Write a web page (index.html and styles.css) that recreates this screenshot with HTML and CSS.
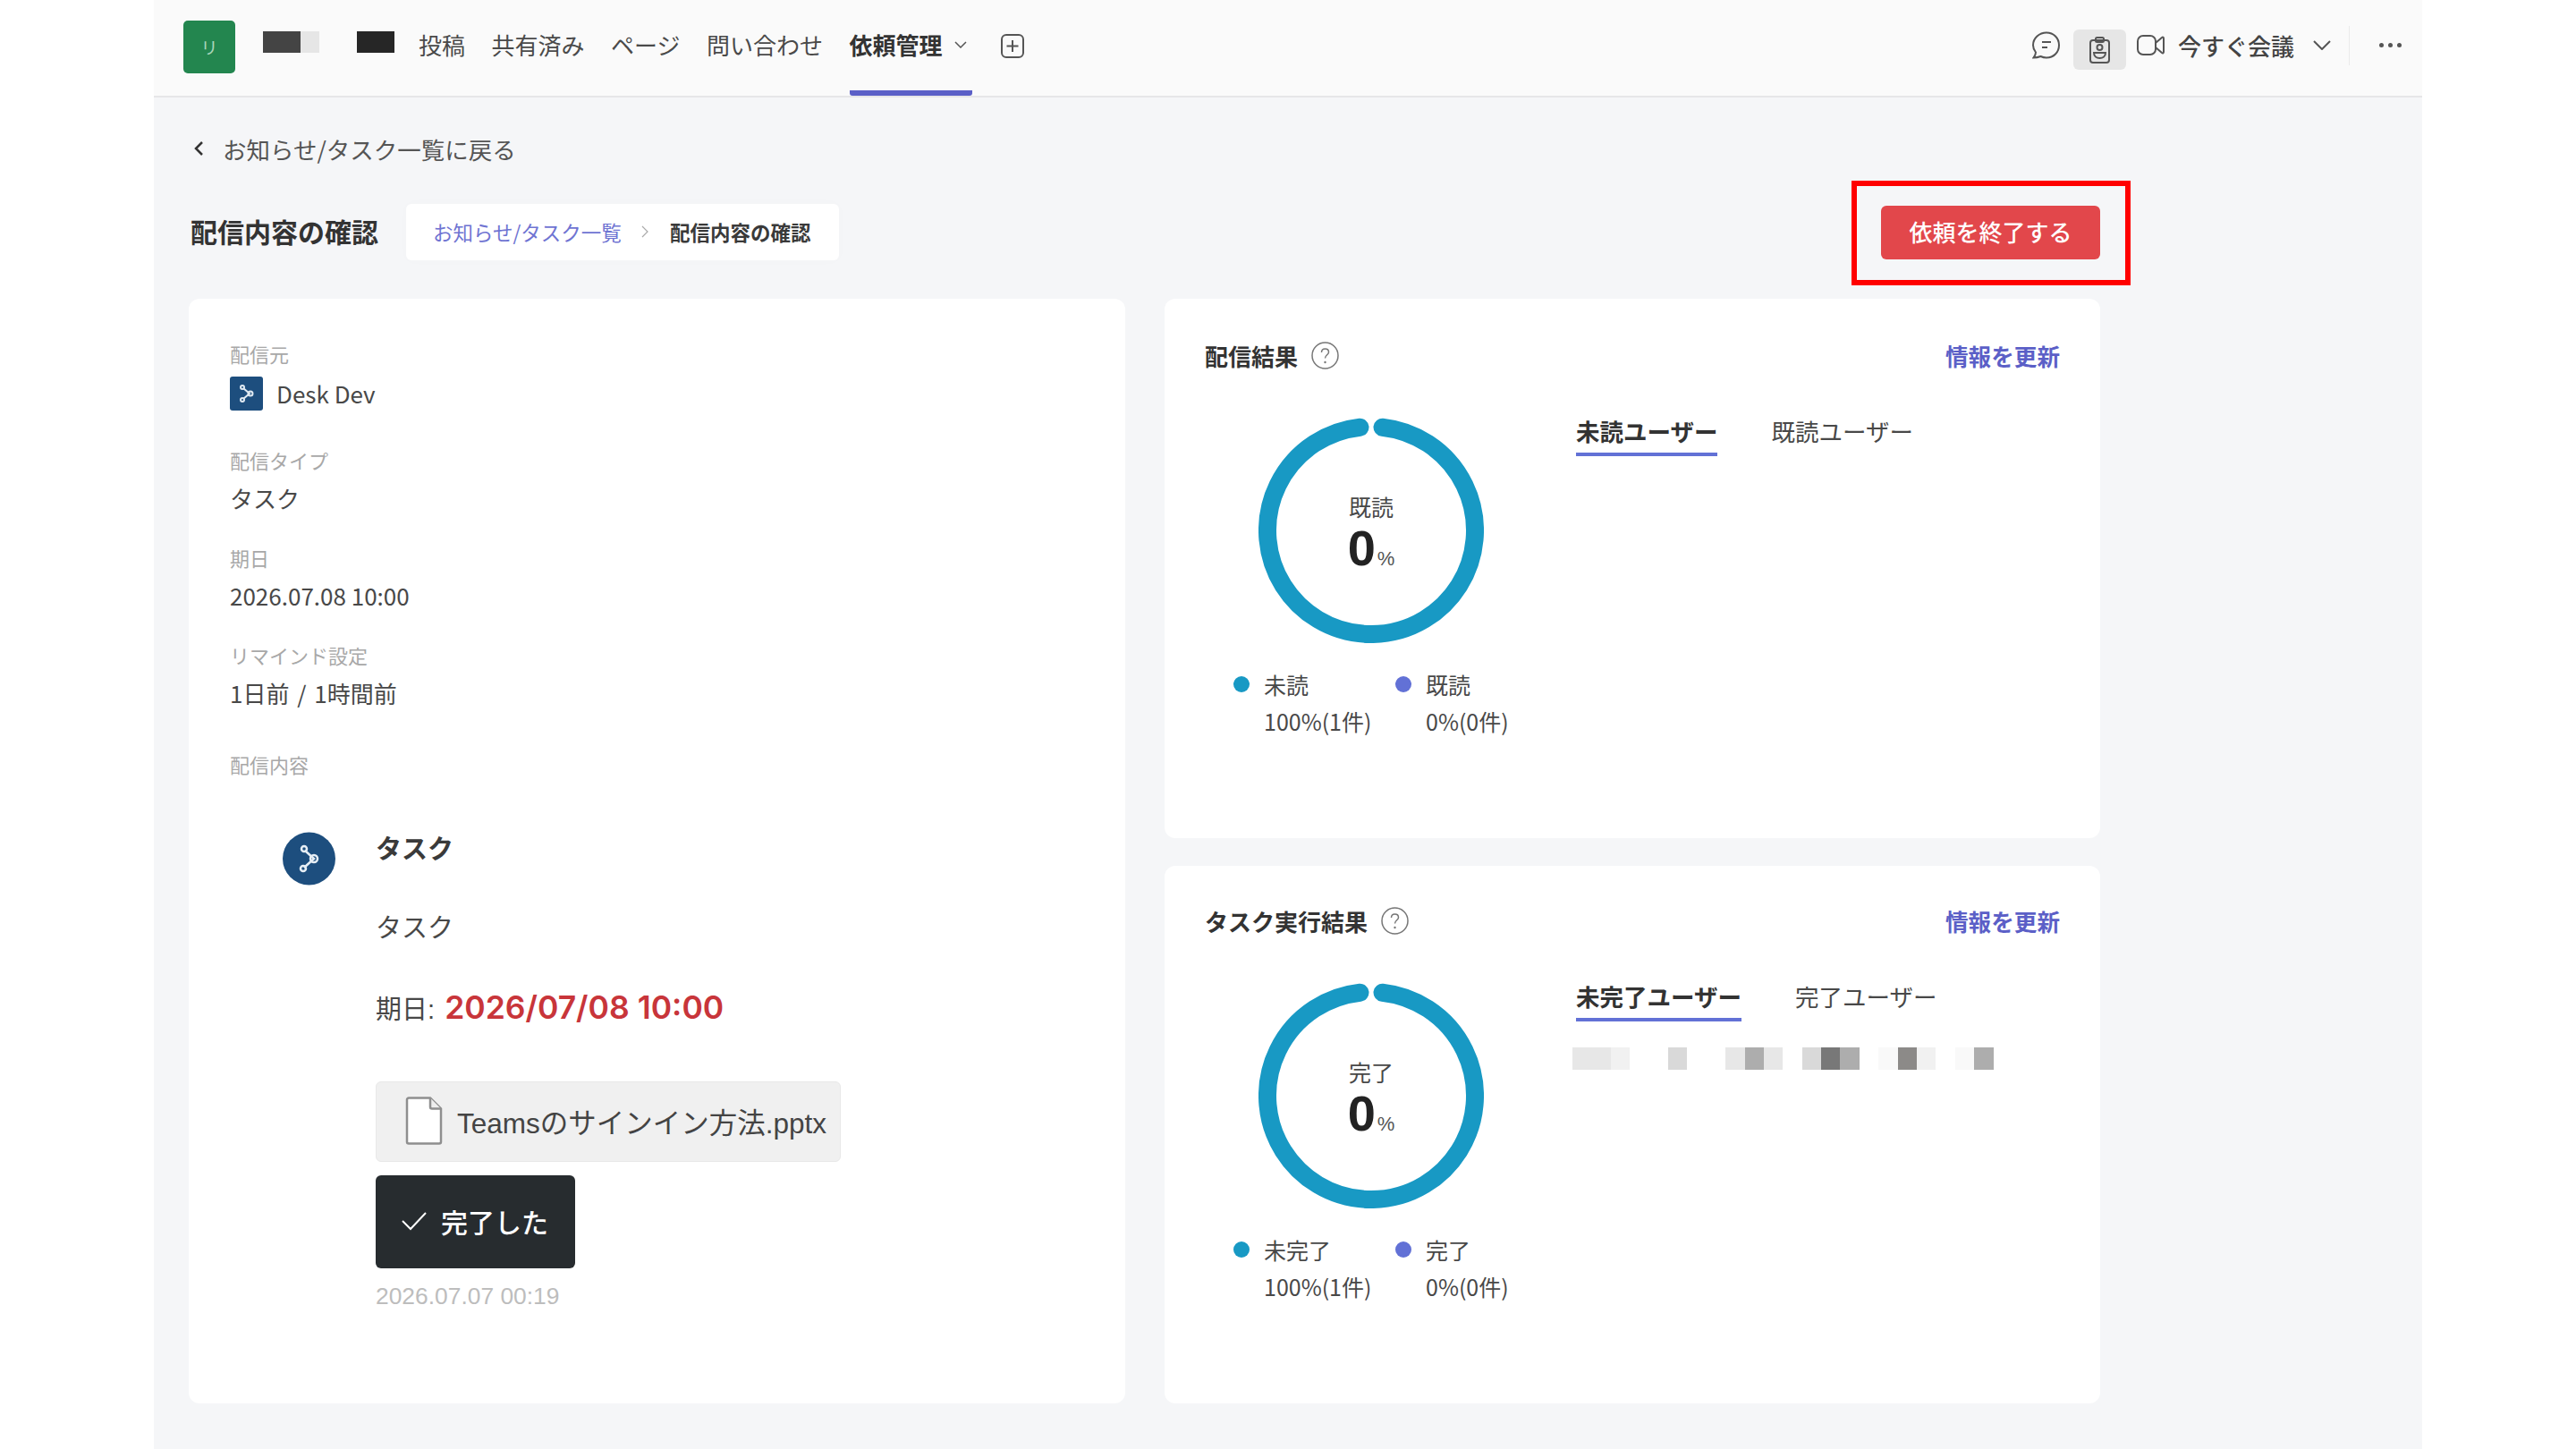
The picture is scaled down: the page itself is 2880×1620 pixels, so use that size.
FILE: index.html
```html
<!DOCTYPE html>
<html lang="ja">
<head>
    <meta charset="UTF-8">
    <meta name="viewport" content="width=device-width, initial-scale=1.0">
    <title>配信内容の確認</title>
    <link rel="stylesheet" href="styles.css">
</head>
<body>
    <div class="app">
        <!-- Barra superior -->
        <header class="topbar">
            <div class="app-tile">リ</div>
            <div class="redact redact-a"><span></span><span></span></div>
            <div class="redact redact-b"></div>
            <nav class="nav">
                <a class="nav-item">投稿</a>
                <a class="nav-item">共有済み</a>
                <a class="nav-item">ページ</a>
                <a class="nav-item">問い合わせ</a>
                <a class="nav-item nav-active">依頼管理
                    <svg class="nav-chevron" viewBox="0 0 14 8"><path d="M1 1l6 6 6-6"/></svg>
                </a>
                <svg class="nav-plus" viewBox="0 0 26 27"><rect x="1" y="1" width="24" height="25" rx="5"/><path d="M13 7v13M6.500 13.500h13"/></svg>
            </nav>
            <div class="top-actions">
                <svg class="icon-chat" viewBox="0 0 31 31"><path d="M16 1.500c8 0 14 6 14 14s-6 14-14 14c-2.500 0-4.500-.5-6.500-1.500-2.500 1-5 1.500-8 1.500 1.500-2 2.500-3.500 2.500-6-2-2.500-3-5-3-8 0-8 7-14 15-14z"/><path d="M11 12h10M11 18h6"/></svg>
                <div class="icon-selected">
                    <svg class="icon-badge" viewBox="0 0 23 30"><rect x="1" y="4" width="21" height="25" rx="3"/><rect x="7" y="1" width="9" height="5" rx="1.500"/><circle cx="11.500" cy="12" r="3"/><path d="M5 18h13c0 4-3 6-6.500 6S5 22 5 18z"/></svg>
                </div>
                <svg class="icon-video" viewBox="0 0 31 23"><rect x="1" y="1" width="20" height="21" rx="6"/><path d="M21 9l7-6c1-.8 2-.3 2 1v15c0 1.300-1 1.800-2 1l-7-6"/></svg>
                <span class="meet-label">今すぐ会議</span>
                <svg class="meet-chevron" viewBox="0 0 20 11"><path d="M1 1l9 9 9-9"/></svg>
                <div class="top-divider"></div>
                <div class="dots"><i></i><i></i><i></i></div>
            </div>
        </header>

        <main class="content">
            <a class="back-link">
                <svg class="back-chevron" viewBox="0 0 12 18"><path d="M10 2L3 9l7 7"/></svg>
                お知らせ/タスク一覧に戻る
            </a>

            <div class="title-row">
                <h1 class="page-title">配信内容の確認</h1>
                <div class="crumbs">
                    <a class="crumb-link">お知らせ/タスク一覧</a>
                    <svg class="crumb-sep" viewBox="0 0 8 14"><path d="M1 1l6 6-6 6"/></svg>
                    <span class="crumb-current">配信内容の確認</span>
                </div>
                <div class="finish-wrap">
                    <button class="finish-btn">依頼を終了する</button>
                    <div class="highlight"></div>
                </div>
            </div>

            <div class="columns">
                <!-- Coluna de detalhes -->
                <section class="card detail-card">
                    <div class="field field-source">
                        <div class="field-label">配信元</div>
                        <div class="field-value source-row">
                            <svg class="source-icon" viewBox="0 0 37 38"><rect width="37" height="38" rx="3" fill="#1d4e7e"/><g fill="none" stroke="#dfe9f2" stroke-width="2"><path d="M15 13l7 6-7 6"/><circle cx="14" cy="12" r="2"/><circle cx="23" cy="19" r="2.500"/><circle cx="14" cy="26" r="2"/></g></svg>
                            <span>Desk Dev</span>
                        </div>
                    </div>
                    <div class="field">
                        <div class="field-label">配信タイプ</div>
                        <div class="field-value">タスク</div>
                    </div>
                    <div class="field">
                        <div class="field-label">期日</div>
                        <div class="field-value">2026.07.08 10:00</div>
                    </div>
                    <div class="field field-remind">
                        <div class="field-label">リマインド設定</div>
                        <div class="field-value value-spaced">1日前 / 1時間前</div>
                    </div>
                    <div class="field-label">配信内容</div>

                    <div class="message">
                        <svg class="message-avatar" viewBox="0 0 59 60"><circle cx="29.500" cy="30" r="29.500" fill="#1d4e7e"/><g fill="none" stroke="#e6eef5" stroke-width="2.500"><path d="M25 21l10 9-11 10"/><circle cx="24" cy="19" r="3"/><circle cx="35" cy="30" r="4"/><circle cx="23" cy="41" r="3"/></g></svg>
                        <div class="message-body">
                            <div class="message-title">タスク</div>
                            <div class="message-text">タスク</div>
                            <div class="message-due">期日: <strong>2026/07/08 10:00</strong></div>
                            <div class="file-box">
                                <svg class="file-icon" viewBox="0 0 42 54"><path d="M2 3.500A2 2 0 0 1 4 1.500h24l12 12V50.500a2 2 0 0 1-2 2H4a2 2 0 0 1-2-2z" fill="#fff" stroke="#8f8f8f" stroke-width="2.500"/><path d="M28 1.500v10a2 2 0 0 0 2 2h10" fill="#eee" stroke="#8f8f8f" stroke-width="2.500"/></svg>
                                <span>Teamsのサインイン方法.pptx</span>
                            </div>
                            <button class="done-btn">
                                <svg class="done-check" viewBox="0 0 28 22"><path d="M1 11l9 9L27 2"/></svg>
                                完了した
                            </button>
                            <div class="message-time">2026.07.07 00:19</div>
                        </div>
                    </div>
                </section>

                <!-- Coluna de resultados -->
                <div class="results">
                    <section class="card result-card result-delivery">
                        <div class="result-head">
                            <h2 class="result-title">配信結果</h2>
                            <svg class="help-icon" viewBox="0 0 31 31"><circle cx="15.500" cy="15.500" r="14.500"/><path d="M11.500 12c0-2.500 1.800-4 4-4s4 1.500 4 3.700c0 3-4 3.300-4 6.800"/><circle class="help-dot" cx="15.500" cy="23" r="1.200"/></svg>
                            <a class="refresh-link">情報を更新</a>
                        </div>
                        <div class="result-body">
                            <div class="chart-col">
                                <div class="donut">
                                    <svg class="donut-ring" viewBox="0 0 252 252"><path d="M138.500 10.700A116 116 0 1 1 113.500 10.700"/></svg>
                                    <div class="donut-center">
                                        <div class="donut-label">既読</div>
                                        <div class="donut-num">0<small>%</small></div>
                                    </div>
                                </div>
                                <div class="legend">
                                    <div class="legend-item">
                                        <i class="legend-dot dot-blue"></i><span>未読</span>
                                        <span class="legend-count">100%(1件)</span>
                                    </div>
                                    <div class="legend-item">
                                        <i class="legend-dot dot-purple"></i><span>既読</span>
                                        <span class="legend-count">0%(0件)</span>
                                    </div>
                                </div>
                            </div>
                            <div class="tabs-col">
                                <div class="tabs">
                                    <a class="tab tab-active">未読ユーザー</a>
                                    <a class="tab">既読ユーザー</a>
                                </div>
                            </div>
                        </div>
                    </section>

                    <section class="card result-card result-task">
                        <div class="result-head">
                            <h2 class="result-title">タスク実行結果</h2>
                            <svg class="help-icon" viewBox="0 0 31 31"><circle cx="15.500" cy="15.500" r="14.500"/><path d="M11.500 12c0-2.500 1.800-4 4-4s4 1.500 4 3.700c0 3-4 3.300-4 6.800"/><circle class="help-dot" cx="15.500" cy="23" r="1.200"/></svg>
                            <a class="refresh-link">情報を更新</a>
                        </div>
                        <div class="result-body">
                            <div class="chart-col">
                                <div class="donut">
                                    <svg class="donut-ring" viewBox="0 0 252 252"><path d="M138.500 10.700A116 116 0 1 1 113.500 10.700"/></svg>
                                    <div class="donut-center">
                                        <div class="donut-label">完了</div>
                                        <div class="donut-num">0<small>%</small></div>
                                    </div>
                                </div>
                                <div class="legend">
                                    <div class="legend-item">
                                        <i class="legend-dot dot-blue"></i><span>未完了</span>
                                        <span class="legend-count">100%(1件)</span>
                                    </div>
                                    <div class="legend-item">
                                        <i class="legend-dot dot-purple"></i><span>完了</span>
                                        <span class="legend-count">0%(0件)</span>
                                    </div>
                                </div>
                            </div>
                            <div class="tabs-col">
                                <div class="tabs">
                                    <a class="tab tab-active">未完了ユーザー</a>
                                    <a class="tab">完了ユーザー</a>
                                </div>
                                <div class="pixels">
                                    <i class="s2"></i><i class="s2"></i><i class="s1"></i><i></i>
                                    <i></i><i class="s3"></i><i></i><i></i>
                                    <i class="s2"></i><i class="s5"></i><i class="s2"></i><i></i>
                                    <i class="s3"></i><i class="s7"></i><i class="s5"></i><i></i>
                                    <i class="s0"></i><i class="s6"></i><i class="s1"></i><i></i>
                                    <i class="s0"></i><i class="s5"></i>
                                </div>
                            </div>
                        </div>
                    </section>
                </div>
            </div>
        </main>
    </div>
</body>
</html>
```

FILE: styles.css
```css
* {
    margin: 0;
    padding: 0;
    box-sizing: border-box;
}

body {
    background-color: #fff;
    font-family: "Noto Sans CJK JP", "Noto Sans", sans-serif;
    color: #3a3a3a;
}

.app {
    width: 2536px;
    height: 1620px;
    margin: 0 auto;
    background-color: #f5f6f8;
    overflow: hidden;
}

/* Barra superior */
.topbar {
    display: flex;
    align-items: center;
    height: 109px;
    padding-left: 33px;
    background-color: #fafafa;
    border-bottom: 2px solid #e6e6e8;
}

.app-tile {
    display: flex;
    align-items: center;
    justify-content: center;
    width: 58px;
    height: 59px;
    margin-bottom: 3px;
    border-radius: 5px;
    background-color: #23864f;
    color: #a9d6ba;
    font-size: 19px;
}

.redact {
    display: flex;
    height: 24px;
    margin-bottom: 14px;
}

.redact-a {
    margin-left: 31px;
}

.redact-a span:first-child {
    width: 42px;
    background-color: #444;
}

.redact-a span:last-child {
    width: 21px;
    background-color: #e6e6e6;
}

.redact-b {
    width: 42px;
    margin-left: 42px;
    background-color: #262626;
}

.nav {
    display: flex;
    align-items: center;
    gap: 29.500px;
    height: 100%;
    margin-left: 27px;
}

.nav-item {
    display: flex;
    align-items: center;
    gap: 12px;
    height: 100%;
    padding-bottom: 3px;
    font-size: 26px;
    color: #4a4a4a;
    border-bottom: 6px solid transparent;
}

.nav-active {
    font-weight: 700;
    color: #333;
    border-bottom-color: #5b5fc7;
    border-radius: 0 0 3px 3px;
    padding-right: 6px;
}

.nav-chevron {
    width: 14px;
    height: 8px;
    margin-left: 1px;
    margin-top: 2px;
    fill: none;
    stroke: #555;
    stroke-width: 1.500;
}

.nav-plus {
    width: 26px;
    height: 27px;
    margin-left: 3px;
    margin-bottom: 4px;
    fill: none;
    stroke: #555;
    stroke-width: 2;
}

.top-actions {
    display: flex;
    align-items: center;
    height: 100%;
    margin-left: auto;
    padding-bottom: 6px;
}

.icon-chat {
    width: 31px;
    height: 31px;
    fill: none;
    stroke: #555;
    stroke-width: 2;
}

.icon-selected {
    display: flex;
    align-items: center;
    justify-content: center;
    width: 59px;
    height: 45px;
    margin-left: 15px;
    margin-top: 10px;
    border-radius: 6px;
    background-color: #e6e6e6;
}

.icon-badge {
    width: 23px;
    height: 30px;
    fill: none;
    stroke: #555;
    stroke-width: 2;
}

.icon-video {
    width: 31px;
    height: 23px;
    margin-left: 12px;
    fill: none;
    stroke: #555;
    stroke-width: 2;
}

.meet-label {
    margin-left: 15px;
    font-size: 26px;
    font-weight: 500;
    color: #444;
}

.meet-chevron {
    width: 20px;
    height: 11px;
    margin-left: 21px;
    fill: none;
    stroke: #555;
    stroke-width: 2;
}

.top-divider {
    width: 1px;
    height: 44px;
    margin-left: 20px;
    background-color: #eaeaea;
}

.dots {
    display: flex;
    gap: 5px;
    margin-left: 33px;
    margin-right: 23px;
}

.dots i {
    width: 5px;
    height: 5px;
    border-radius: 50%;
    background-color: #555;
}

/* Conteudo */
.content {
    width: 2176px;
    padding-left: 39px;
    padding-top: 41px;
}

.back-link {
    display: flex;
    align-items: center;
    gap: 21px;
    height: 34px;
    padding-left: 5px;
    padding-bottom: 2px;
    font-size: 26.500px;
    color: #555;
}

.back-chevron {
    width: 12px;
    height: 18px;
    fill: none;
    stroke: #333;
    stroke-width: 2.500;
}

.title-row {
    display: flex;
    align-items: center;
    width: 2137px;
    height: 63px;
    margin-top: 44px;
}

.page-title {
    width: 243px;
    padding-left: 2px;
    padding-bottom: 3px;
    font-size: 30px;
    font-weight: 700;
    color: #333;
}

.crumbs {
    display: flex;
    align-items: center;
    width: 484px;
    height: 63px;
    padding-left: 30px;
    padding-bottom: 2px;
    border-radius: 6px;
    background-color: #fff;
    box-shadow: 0 0 14px rgba(0, 0, 0, 0.015);
    font-size: 22.500px;
}

.crumb-link {
    color: #6f74d2;
}

.crumb-sep {
    width: 8px;
    height: 14px;
    margin: 0 24px 0 22px;
    fill: none;
    stroke: #aaa;
    stroke-width: 1.200;
}

.crumb-current {
    font-weight: 700;
    color: #3a3a3a;
}

.finish-wrap {
    position: relative;
    margin-left: auto;
}

.finish-btn {
    display: block;
    width: 245px;
    height: 60px;
    padding-bottom: 3px;
    border: none;
    border-radius: 6px;
    background-color: #e2474b;
    color: #fff;
    font-family: inherit;
    font-size: 26px;
    font-weight: 500;
}

/* Moldura vermelha de anotacao */
.highlight {
    position: absolute;
    top: -28px;
    left: -33px;
    right: -34px;
    bottom: -29px;
    border: 6px solid #f00;
}

.columns {
    display: grid;
    grid-template-columns: 1047px 1046px;
    gap: 44px;
    width: 2137px;
    margin-top: 43px;
}

.card {
    border-radius: 12px;
    background-color: #fff;
}

/* Card de detalhes */
.detail-card {
    height: 1235px;
    padding: 47px 46px 0;
}

.field {
    margin-bottom: 32px;
}

.field-source {
    margin-bottom: 41px;
}

.field-remind {
    margin-bottom: 45px;
}

.field-label {
    height: 32px;
    line-height: 28px;
    font-size: 22px;
    color: #a8a8a8;
}

.field-value {
    height: 38px;
    margin-top: 7px;
    line-height: 36px;
    font-size: 26px;
    color: #484848;
}

.value-spaced {
    word-spacing: 3px;
}

.source-row {
    display: flex;
    align-items: center;
    gap: 15px;
    margin-top: 8px;
}

.source-icon {
    width: 37px;
    height: 38px;
}

.message {
    display: flex;
    gap: 45px;
    margin-top: 56px;
    margin-left: 59px;
    font-family: "Liberation Sans", "Noto Sans CJK JP", sans-serif;
}

.message-avatar {
    flex-shrink: 0;
    width: 59px;
    height: 60px;
    margin-top: 2px;
}

.message-title {
    height: 40px;
    line-height: 44px;
    font-size: 29px;
    font-weight: 700;
    color: #3a3a3a;
}

.message-text {
    height: 40px;
    margin-top: 48px;
    line-height: 44px;
    font-size: 29px;
    color: #484848;
}

.message-due {
    height: 44px;
    margin-top: 49px;
    line-height: 44px;
    font-size: 29px;
    color: #484848;
}

.message-due strong {
    margin-left: 3px;
    font-family: Inter, "Liberation Sans", sans-serif;
    font-size: 35.500px;
    font-weight: 600;
    color: #c8353a;
}

.file-box {
    display: flex;
    align-items: center;
    gap: 16px;
    width: 520px;
    height: 90px;
    margin-top: 60px;
    padding-left: 32px;
    padding-bottom: 2px;
    border: 1px solid #e8e8e8;
    border-radius: 6px;
    background-color: #f0f0f0;
    font-size: 31.500px;
    color: #444;
    white-space: nowrap;
}

.file-icon {
    flex-shrink: 0;
    width: 42px;
    height: 54px;
}

.done-btn {
    display: flex;
    align-items: center;
    gap: 16px;
    width: 223px;
    height: 104px;
    margin-top: 15px;
    padding-left: 29px;
    padding-bottom: 2px;
    border: none;
    border-radius: 6px;
    background-color: #272c2f;
    color: #fff;
    font-family: inherit;
    font-size: 30px;
    font-weight: 500;
}

.done-check {
    width: 28px;
    height: 22px;
    fill: none;
    stroke: #fff;
    stroke-width: 2;
}

.message-time {
    height: 30px;
    margin-top: 16px;
    line-height: 30px;
    font-size: 26.400px;
    color: #bdbdbd;
}

/* Cards de resultado */
.results {
    display: flex;
    flex-direction: column;
    gap: 31px;
}

.result-card {
    padding: 47px 45px 0;
}

.result-delivery {
    height: 603px;
}

.result-task {
    height: 601px;
    padding-top: 45px;
}

.result-head {
    display: flex;
    align-items: center;
    height: 36px;
    padding-bottom: 4px;
}

.result-title {
    font-size: 26px;
    font-weight: 700;
    color: #333;
}

.help-icon {
    width: 31px;
    height: 31px;
    margin-left: 15px;
    fill: none;
    stroke: #777;
    stroke-width: 1.500;
}

.help-dot {
    fill: #777;
    stroke: none;
}

.refresh-link {
    margin-left: auto;
    font-size: 25.600px;
    font-weight: 700;
    color: #5b5fc7;
}

.result-body {
    display: flex;
}

.chart-col {
    flex-shrink: 0;
    width: 415px;
}

.donut {
    display: grid;
    width: 252px;
    height: 252px;
    margin-top: 50px;
    margin-left: 60px;
}

.donut-ring {
    grid-area: 1 / 1;
    width: 252px;
    height: 252px;
    fill: none;
    stroke: #1899c4;
    stroke-width: 20;
    stroke-linecap: round;
}

.donut-center {
    grid-area: 1 / 1;
    align-self: center;
    justify-self: center;
    margin-top: 10px;
    font-family: "Liberation Sans", "Noto Sans CJK JP", sans-serif;
    text-align: center;
}

.donut-label {
    height: 30px;
    line-height: 32px;
    font-size: 25px;
    color: #484848;
}

.donut-num {
    height: 62px;
    line-height: 62px;
    font-size: 56px;
    font-weight: 700;
    color: #222;
}

.donut-num small {
    margin-left: 2px;
    font-size: 22px;
    font-weight: 400;
    color: #555;
}

.legend {
    display: flex;
    margin-top: 28px;
    margin-left: 32px;
}

.legend-item {
    display: grid;
    grid-template-columns: 34px auto;
    row-gap: 5px;
    align-items: center;
    width: 181px;
    line-height: 36px;
    font-size: 25px;
    color: #484848;
}

.legend-dot {
    width: 18px;
    height: 18px;
    border-radius: 50%;
}

.dot-blue {
    background-color: #1899c4;
}

.dot-purple {
    background-color: #6271d6;
}

.legend-count {
    grid-column: 2;
    white-space: nowrap;
}

.tabs {
    display: flex;
    gap: 60px;
    margin-top: 47px;
}

.tab {
    height: 46px;
    padding-bottom: 6px;
    border-bottom: 4px solid transparent;
    line-height: 36px;
    font-size: 26.500px;
    color: #484848;
}

.tab-active {
    font-weight: 700;
    color: #333;
    border-bottom-color: #6271d6;
}

.pixels {
    display: flex;
    height: 25px;
    margin-top: 29px;
    margin-left: -4px;
}

.pixels i {
    width: 21.400px;
    height: 25px;
}

.pixels .s0 { background-color: #f9f9f9; }
.pixels .s1 { background-color: #f1f1f1; }
.pixels .s2 { background-color: #e7e7e7; }
.pixels .s3 { background-color: #d9d9d9; }
.pixels .s5 { background-color: #adadad; }
.pixels .s6 { background-color: #8c8a88; }
.pixels .s7 { background-color: #787878; }
```
